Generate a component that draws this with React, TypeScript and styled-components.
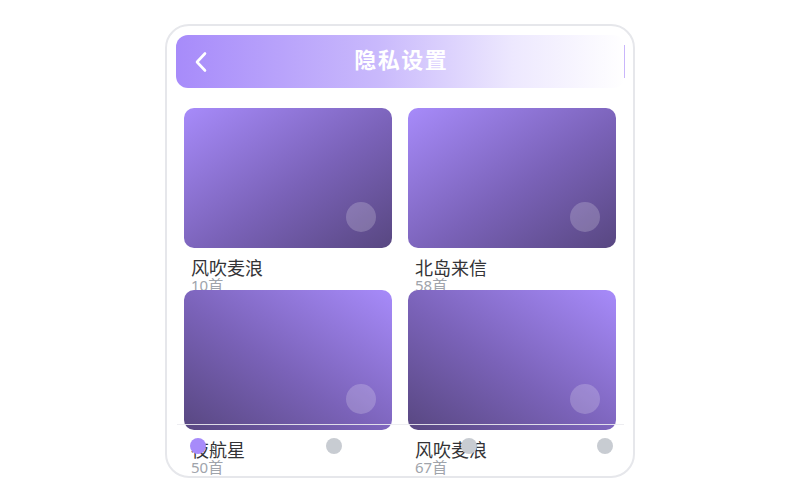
import React from "react";
import styled, { createGlobalStyle } from "styled-components";

const GlobalStyle = createGlobalStyle`
  html, body {
    margin: 0;
    padding: 0;
    background: #ffffff;
  }
  body {
    font-family: "Noto Sans", "Noto Sans CJK SC", sans-serif;
  }
`;

const Page = styled.div`
  width: 800px;
  height: 500px;
  display: flex;
  justify-content: center;
  padding-top: 24px;
  box-sizing: border-box;
`;

const Phone = styled.div`
  position: relative;
  width: 470px;
  height: 454px;
  box-sizing: border-box;
  border: 2px solid #e6e7eb;
  border-radius: 24px;
  background: #fff;
  overflow: hidden;
  padding: 9px 8px 0 9px;
`;

const Header = styled.div`
  position: relative;
  height: 53px;
  border-radius: 12px;
  background: linear-gradient(90deg, #a78bfa 0%, #c9b9fc 45%, #ede8fe 75%, #ffffff 100%);
  display: flex;
  align-items: center;
  justify-content: center;
`;

const BackButton = styled.div`
  position: absolute;
  left: 17px;
  top: 16px;
  width: 16px;
  height: 22px;
  display: flex;
  align-items: center;
  justify-content: center;
`;

const Title = styled.div`
  color: #fff;
  font-size: 22px;
  line-height: 26px;
  font-weight: 700;
  font-family: "Noto Sans CJK SC", sans-serif;
  letter-spacing: 1.5px;
  padding-left: 1.5px;
  margin-bottom: 7px;
`;

const EdgeLine = styled.div`
  position: absolute;
  right: 0;
  top: 10px;
  width: 1px;
  height: 33px;
  background: #c9b6fb;
`;

const Grid = styled.div`
  display: grid;
  grid-template-columns: 208px 208px;
  column-gap: 16px;
  margin: 20px 0 0 8px;
`;

const Item = styled.div`
  display: flex;
  flex-direction: column;
`;

const Cover = styled.div<{ $flip?: boolean }>`
  position: relative;
  height: 140px;
  border-radius: 10px;
  background: ${(p) =>
    p.$flip
      ? "linear-gradient(to bottom left, #a78bfa 0%, #7a62b8 55%, #584781 100%)"
      : "linear-gradient(to bottom right, #a78bfa 0%, #7a62b8 55%, #584781 100%)"};
`;

const PlayDot = styled.div`
  position: absolute;
  right: 16px;
  bottom: 16px;
  width: 30px;
  height: 30px;
  border-radius: 50%;
  background: rgba(255, 255, 255, 0.2);
`;

const Info = styled.div`
  padding: 9px 7px 0 7px;
  height: 33px;
`;

const Name = styled.div`
  font-family: "Noto Sans CJK SC", sans-serif;
  font-size: 18px;
  line-height: 21px;
  color: #333336;
`;

const Count = styled.div`
  font-family: "Noto Sans", "Noto Sans CJK SC", sans-serif;
  font-size: 15px;
  line-height: 14px;
  color: #a0a4ab;
`;

const BottomBar = styled.div`
  position: absolute;
  left: 10px;
  right: 9px;
  bottom: 0;
  height: 52px;
  border-top: 1px solid rgba(235, 235, 240, 0.9);
  display: flex;
  justify-content: space-between;
  align-items: flex-start;
  padding: 13px 11px 0 13px;
  box-sizing: border-box;
`;

const NavDot = styled.div<{ $active?: boolean }>`
  width: 16px;
  height: 16px;
  border-radius: 50%;
  background: ${(p) => (p.$active ? "#a78bfa" : "#c8ccd2")};
`;

const albums = [
  { name: "风吹麦浪", count: "10首", flip: false },
  { name: "北岛来信", count: "58首", flip: false },
  { name: "夜航星", count: "50首", flip: true },
  { name: "风吹麦浪", count: "67首", flip: true },
];

export default function App() {
  return (
    <>
      <GlobalStyle />
      <Page>
        <Phone>
          <Header>
            <BackButton>
              <svg width="14" height="22" viewBox="0 0 14 22" fill="none">
                <path
                  d="M11 2.5 L3 11 L11 19.5"
                  stroke="#fff"
                  strokeWidth="2.6"
                  strokeLinecap="round"
                  strokeLinejoin="round"
                />
              </svg>
            </BackButton>
            <Title>隐私设置</Title>
            <EdgeLine />
          </Header>
          <Grid>
            {albums.map((a, i) => (
              <Item key={i}>
                <Cover $flip={a.flip}>
                  <PlayDot />
                </Cover>
                <Info>
                  <Name>{a.name}</Name>
                  <Count>{a.count}</Count>
                </Info>
              </Item>
            ))}
          </Grid>
          <BottomBar>
            <NavDot $active />
            <NavDot />
            <NavDot />
            <NavDot />
          </BottomBar>
        </Phone>
      </Page>
    </>
  );
}
